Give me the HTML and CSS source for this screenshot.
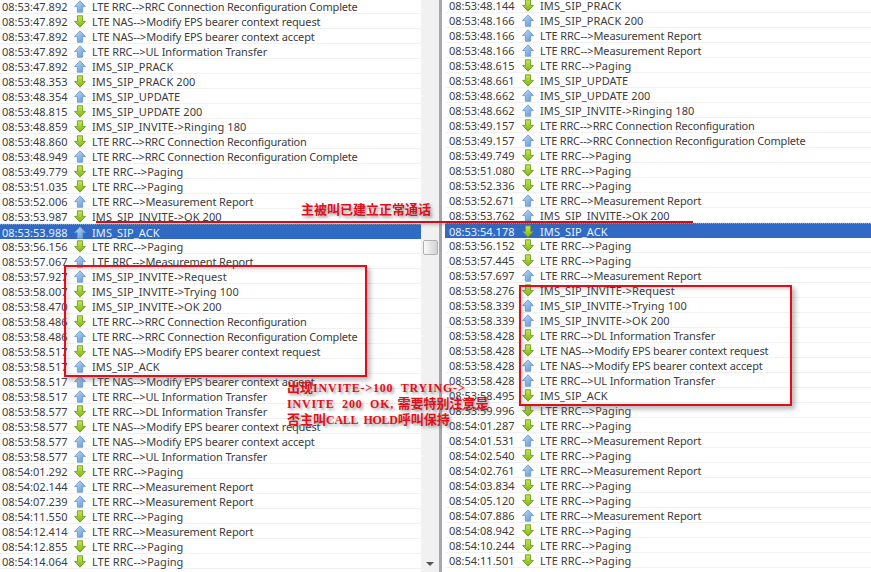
FILE: index.html
```html
<!DOCTYPE html>
<html lang="zh">
<head>
<meta charset="utf-8">
<title>Signalling trace</title>
<link rel="stylesheet" href="styles.css">
</head>
<body>
<svg class="defs" width="0" height="0" aria-hidden="true">
  <defs>
    <linearGradient id="gu" x1="0" y1="0" x2="1" y2="1"><stop offset="0" stop-color="#c4dcf6"/><stop offset="1" stop-color="#5c94d8"/></linearGradient>
    <linearGradient id="gd" x1="0" y1="0" x2="0" y2="1"><stop offset="0" stop-color="#cbe45a"/><stop offset="1" stop-color="#78b414"/></linearGradient>
    <symbol id="up" viewBox="0 0 12 13"><path d="M6 .8 11.4 6.6H8.6V12.2H3.4V6.6H.6Z" fill="url(#gu)" stroke="#6f9ccf" stroke-width=".9" stroke-linejoin="round"/></symbol>
    <symbol id="down" viewBox="0 0 12 13"><path d="M3.4.8H8.6V6.4H11.4L6 12.2.6 6.4H3.4Z" fill="url(#gd)" stroke="#6c9c18" stroke-width=".9" stroke-linejoin="round"/></symbol>
  </defs>
</svg>
<main class="split">
<section class="pane pane-left">
  <ul class="log log-left">
    <li class="row"><span class="t">08:53:47.892</span><svg class="ic"><use href="#up"/></svg><span class="m cfg">LTE RRC--&gt;RRC Connection Reconfiguration Complete</span></li>
    <li class="row"><span class="t">08:53:47.892</span><svg class="ic"><use href="#down"/></svg><span class="m">LTE NAS--&gt;Modify EPS bearer context request</span></li>
    <li class="row"><span class="t">08:53:47.892</span><svg class="ic"><use href="#up"/></svg><span class="m">LTE NAS--&gt;Modify EPS bearer context accept</span></li>
    <li class="row"><span class="t">08:53:47.892</span><svg class="ic"><use href="#up"/></svg><span class="m">LTE RRC--&gt;UL Information Transfer</span></li>
    <li class="row"><span class="t">08:53:47.892</span><svg class="ic"><use href="#up"/></svg><span class="m sip">IMS_SIP_PRACK</span></li>
    <li class="row"><span class="t">08:53:48.353</span><svg class="ic"><use href="#down"/></svg><span class="m sip">IMS_SIP_PRACK 200</span></li>
    <li class="row"><span class="t">08:53:48.354</span><svg class="ic"><use href="#up"/></svg><span class="m sip">IMS_SIP_UPDATE</span></li>
    <li class="row"><span class="t">08:53:48.815</span><svg class="ic"><use href="#down"/></svg><span class="m sip">IMS_SIP_UPDATE 200</span></li>
    <li class="row"><span class="t">08:53:48.859</span><svg class="ic"><use href="#down"/></svg><span class="m sip">IMS_SIP_INVITE-&gt;Ringing 180</span></li>
    <li class="row"><span class="t">08:53:48.860</span><svg class="ic"><use href="#down"/></svg><span class="m cfg">LTE RRC--&gt;RRC Connection Reconfiguration</span></li>
    <li class="row"><span class="t">08:53:48.949</span><svg class="ic"><use href="#up"/></svg><span class="m cfg">LTE RRC--&gt;RRC Connection Reconfiguration Complete</span></li>
    <li class="row"><span class="t">08:53:49.779</span><svg class="ic"><use href="#down"/></svg><span class="m pg">LTE RRC--&gt;Paging</span></li>
    <li class="row"><span class="t">08:53:51.035</span><svg class="ic"><use href="#down"/></svg><span class="m pg">LTE RRC--&gt;Paging</span></li>
    <li class="row"><span class="t">08:53:52.006</span><svg class="ic"><use href="#up"/></svg><span class="m">LTE RRC--&gt;Measurement Report</span></li>
    <li class="row"><span class="t">08:53:53.987</span><svg class="ic"><use href="#down"/></svg><span class="m sip">IMS_SIP_INVITE-&gt;OK 200</span></li>
    <li class="row sel"><span class="t">08:53:53.988</span><svg class="ic"><use href="#up"/></svg><span class="m sip">IMS_SIP_ACK</span></li>
    <li class="row"><span class="t">08:53:56.156</span><svg class="ic"><use href="#down"/></svg><span class="m pg">LTE RRC--&gt;Paging</span></li>
    <li class="row"><span class="t">08:53:57.067</span><svg class="ic"><use href="#up"/></svg><span class="m">LTE RRC--&gt;Measurement Report</span></li>
    <li class="row"><span class="t">08:53:57.927</span><svg class="ic"><use href="#up"/></svg><span class="m sip">IMS_SIP_INVITE-&gt;Request</span></li>
    <li class="row"><span class="t">08:53:58.007</span><svg class="ic"><use href="#down"/></svg><span class="m sip">IMS_SIP_INVITE-&gt;Trying 100</span></li>
    <li class="row"><span class="t">08:53:58.470</span><svg class="ic"><use href="#down"/></svg><span class="m sip">IMS_SIP_INVITE-&gt;OK 200</span></li>
    <li class="row"><span class="t">08:53:58.486</span><svg class="ic"><use href="#down"/></svg><span class="m cfg">LTE RRC--&gt;RRC Connection Reconfiguration</span></li>
    <li class="row"><span class="t">08:53:58.486</span><svg class="ic"><use href="#up"/></svg><span class="m cfg">LTE RRC--&gt;RRC Connection Reconfiguration Complete</span></li>
    <li class="row"><span class="t">08:53:58.517</span><svg class="ic"><use href="#down"/></svg><span class="m">LTE NAS--&gt;Modify EPS bearer context request</span></li>
    <li class="row"><span class="t">08:53:58.517</span><svg class="ic"><use href="#up"/></svg><span class="m sip">IMS_SIP_ACK</span></li>
    <li class="row"><span class="t">08:53:58.517</span><svg class="ic"><use href="#up"/></svg><span class="m">LTE NAS--&gt;Modify EPS bearer context accept</span></li>
    <li class="row"><span class="t">08:53:58.517</span><svg class="ic"><use href="#up"/></svg><span class="m">LTE RRC--&gt;UL Information Transfer</span></li>
    <li class="row"><span class="t">08:53:58.577</span><svg class="ic"><use href="#down"/></svg><span class="m">LTE RRC--&gt;DL Information Transfer</span></li>
    <li class="row"><span class="t">08:53:58.577</span><svg class="ic"><use href="#down"/></svg><span class="m">LTE NAS--&gt;Modify EPS bearer context request</span></li>
    <li class="row"><span class="t">08:53:58.577</span><svg class="ic"><use href="#up"/></svg><span class="m">LTE NAS--&gt;Modify EPS bearer context accept</span></li>
    <li class="row"><span class="t">08:53:58.577</span><svg class="ic"><use href="#up"/></svg><span class="m">LTE RRC--&gt;UL Information Transfer</span></li>
    <li class="row"><span class="t">08:54:01.292</span><svg class="ic"><use href="#down"/></svg><span class="m pg">LTE RRC--&gt;Paging</span></li>
    <li class="row"><span class="t">08:54:02.144</span><svg class="ic"><use href="#up"/></svg><span class="m">LTE RRC--&gt;Measurement Report</span></li>
    <li class="row"><span class="t">08:54:07.239</span><svg class="ic"><use href="#up"/></svg><span class="m">LTE RRC--&gt;Measurement Report</span></li>
    <li class="row"><span class="t">08:54:11.550</span><svg class="ic"><use href="#down"/></svg><span class="m pg">LTE RRC--&gt;Paging</span></li>
    <li class="row"><span class="t">08:54:12.414</span><svg class="ic"><use href="#up"/></svg><span class="m">LTE RRC--&gt;Measurement Report</span></li>
    <li class="row"><span class="t">08:54:12.855</span><svg class="ic"><use href="#down"/></svg><span class="m pg">LTE RRC--&gt;Paging</span></li>
    <li class="row"><span class="t">08:54:14.064</span><svg class="ic"><use href="#down"/></svg><span class="m pg">LTE RRC--&gt;Paging</span></li>
  </ul>
  <div class="scrollbar"><div class="thumb"></div><div class="arrow"></div></div>
</section>
<div class="divider"></div>
<section class="pane pane-right">
  <ul class="log log-right">
    <li class="row"><span class="t">08:53:48.144</span><svg class="ic"><use href="#down"/></svg><span class="m sip">IMS_SIP_PRACK</span></li>
    <li class="row"><span class="t">08:53:48.166</span><svg class="ic"><use href="#up"/></svg><span class="m sip">IMS_SIP_PRACK 200</span></li>
    <li class="row"><span class="t">08:53:48.166</span><svg class="ic"><use href="#up"/></svg><span class="m">LTE RRC--&gt;Measurement Report</span></li>
    <li class="row"><span class="t">08:53:48.166</span><svg class="ic"><use href="#up"/></svg><span class="m">LTE RRC--&gt;Measurement Report</span></li>
    <li class="row"><span class="t">08:53:48.615</span><svg class="ic"><use href="#down"/></svg><span class="m pg">LTE RRC--&gt;Paging</span></li>
    <li class="row"><span class="t">08:53:48.661</span><svg class="ic"><use href="#down"/></svg><span class="m sip">IMS_SIP_UPDATE</span></li>
    <li class="row"><span class="t">08:53:48.662</span><svg class="ic"><use href="#up"/></svg><span class="m sip">IMS_SIP_UPDATE 200</span></li>
    <li class="row"><span class="t">08:53:48.662</span><svg class="ic"><use href="#up"/></svg><span class="m sip">IMS_SIP_INVITE-&gt;Ringing 180</span></li>
    <li class="row"><span class="t">08:53:49.157</span><svg class="ic"><use href="#down"/></svg><span class="m cfg">LTE RRC--&gt;RRC Connection Reconfiguration</span></li>
    <li class="row"><span class="t">08:53:49.157</span><svg class="ic"><use href="#up"/></svg><span class="m cfg">LTE RRC--&gt;RRC Connection Reconfiguration Complete</span></li>
    <li class="row"><span class="t">08:53:49.749</span><svg class="ic"><use href="#down"/></svg><span class="m pg">LTE RRC--&gt;Paging</span></li>
    <li class="row"><span class="t">08:53:51.080</span><svg class="ic"><use href="#down"/></svg><span class="m pg">LTE RRC--&gt;Paging</span></li>
    <li class="row"><span class="t">08:53:52.336</span><svg class="ic"><use href="#down"/></svg><span class="m pg">LTE RRC--&gt;Paging</span></li>
    <li class="row"><span class="t">08:53:52.671</span><svg class="ic"><use href="#up"/></svg><span class="m">LTE RRC--&gt;Measurement Report</span></li>
    <li class="row"><span class="t">08:53:53.762</span><svg class="ic"><use href="#up"/></svg><span class="m sip">IMS_SIP_INVITE-&gt;OK 200</span></li>
    <li class="row sel"><span class="t">08:53:54.178</span><svg class="ic"><use href="#down"/></svg><span class="m sip">IMS_SIP_ACK</span></li>
    <li class="row"><span class="t">08:53:56.152</span><svg class="ic"><use href="#down"/></svg><span class="m pg">LTE RRC--&gt;Paging</span></li>
    <li class="row"><span class="t">08:53:57.445</span><svg class="ic"><use href="#down"/></svg><span class="m pg">LTE RRC--&gt;Paging</span></li>
    <li class="row"><span class="t">08:53:57.697</span><svg class="ic"><use href="#up"/></svg><span class="m">LTE RRC--&gt;Measurement Report</span></li>
    <li class="row"><span class="t">08:53:58.276</span><svg class="ic"><use href="#down"/></svg><span class="m sip">IMS_SIP_INVITE-&gt;Request</span></li>
    <li class="row"><span class="t">08:53:58.339</span><svg class="ic"><use href="#up"/></svg><span class="m sip">IMS_SIP_INVITE-&gt;Trying 100</span></li>
    <li class="row"><span class="t">08:53:58.339</span><svg class="ic"><use href="#up"/></svg><span class="m sip">IMS_SIP_INVITE-&gt;OK 200</span></li>
    <li class="row"><span class="t">08:53:58.428</span><svg class="ic"><use href="#down"/></svg><span class="m">LTE RRC--&gt;DL Information Transfer</span></li>
    <li class="row"><span class="t">08:53:58.428</span><svg class="ic"><use href="#down"/></svg><span class="m">LTE NAS--&gt;Modify EPS bearer context request</span></li>
    <li class="row"><span class="t">08:53:58.428</span><svg class="ic"><use href="#up"/></svg><span class="m">LTE NAS--&gt;Modify EPS bearer context accept</span></li>
    <li class="row"><span class="t">08:53:58.428</span><svg class="ic"><use href="#up"/></svg><span class="m">LTE RRC--&gt;UL Information Transfer</span></li>
    <li class="row"><span class="t">08:53:58.495</span><svg class="ic"><use href="#down"/></svg><span class="m sip">IMS_SIP_ACK</span></li>
    <li class="row"><span class="t">08:53:59.996</span><svg class="ic"><use href="#down"/></svg><span class="m pg">LTE RRC--&gt;Paging</span></li>
    <li class="row"><span class="t">08:54:01.287</span><svg class="ic"><use href="#down"/></svg><span class="m pg">LTE RRC--&gt;Paging</span></li>
    <li class="row"><span class="t">08:54:01.531</span><svg class="ic"><use href="#up"/></svg><span class="m">LTE RRC--&gt;Measurement Report</span></li>
    <li class="row"><span class="t">08:54:02.540</span><svg class="ic"><use href="#down"/></svg><span class="m pg">LTE RRC--&gt;Paging</span></li>
    <li class="row"><span class="t">08:54:02.761</span><svg class="ic"><use href="#up"/></svg><span class="m">LTE RRC--&gt;Measurement Report</span></li>
    <li class="row"><span class="t">08:54:03.834</span><svg class="ic"><use href="#down"/></svg><span class="m pg">LTE RRC--&gt;Paging</span></li>
    <li class="row"><span class="t">08:54:05.120</span><svg class="ic"><use href="#down"/></svg><span class="m pg">LTE RRC--&gt;Paging</span></li>
    <li class="row"><span class="t">08:54:07.886</span><svg class="ic"><use href="#up"/></svg><span class="m">LTE RRC--&gt;Measurement Report</span></li>
    <li class="row"><span class="t">08:54:08.942</span><svg class="ic"><use href="#down"/></svg><span class="m pg">LTE RRC--&gt;Paging</span></li>
    <li class="row"><span class="t">08:54:10.244</span><svg class="ic"><use href="#down"/></svg><span class="m pg">LTE RRC--&gt;Paging</span></li>
    <li class="row"><span class="t">08:54:11.501</span><svg class="ic"><use href="#down"/></svg><span class="m pg">LTE RRC--&gt;Paging</span></li>
  </ul>
</section>
</main>
<div class="mark box-left"></div>
<div class="mark box-right"></div>
<div class="mark rule"></div>
<p class="note note-top">主被叫已建立正常通话</p>
<p class="note note-main">出现<span class="lat">INVITE-&gt;100&nbsp; TRYING-&gt;</span><br><span class="lat">INVITE&nbsp; 200&nbsp; OK,</span> 需要特别注意是<br>否主叫<span class="lat lat-call">CALL&nbsp; HOLD</span>呼叫保持</p>
</body>
</html>
```
FILE: styles.css
```css
* { box-sizing: border-box; }
html, body { margin: 0; height: 572px; overflow: hidden; background: #fff; }
body { position: relative; font-family: "Noto Sans", "Liberation Sans", sans-serif; }
.defs { position: absolute; }

.split { display: flex; height: 572px; }
.pane { display: flex; min-width: 0; overflow: hidden; height: 572px; }
.pane-left { width: 439px; }
.pane-right { flex: 1; padding-left: 3px; }
.divider { width: 3px; background: #a4a8ac; }

.log { list-style: none; margin: 0; padding: 0; flex: 1; min-width: 0; }
.log-left { margin-top: -1px; }
.log-right { margin-top: -2px; }
.row {
  display: flex;
  align-items: center;
  height: 15px;
  padding-top: 1px;
  font-size: 11px;
  line-height: 14px;
  color: #3c3c3c;
  white-space: nowrap;
  border-bottom: 1px solid #f1f1f1;
}
.log-left .row { padding-left: 2px; }
.log-right .row { padding-left: 4px; }
.row .t { width: 72px; flex: none; }
.log-right .row .t { width: 73px; }
.row .m { letter-spacing: -.12px; }
.row .cfg { letter-spacing: -.2px; }
.row .sip { letter-spacing: .1px; }
.row .pg { letter-spacing: .05px; }
.ic { width: 12px; height: 13px; flex: none; margin-right: 6px; }
.sel { background: #316ac5; color: #e8f0fb; border-bottom: 0; border-top: 1px dotted #7fa3dc; }

.scrollbar { width: 18px; flex: none; background: #f1f1f1; display: flex; flex-direction: column; align-items: center; position: relative; }
.thumb {
  margin-top: 240px;
  width: 15px;
  height: 15px;
  border: 1px solid #b0b0b0;
  border-radius: 2px;
  background: linear-gradient(90deg, #fafafa, #d2d2d2);
}
.arrow {
  margin-top: 307px;
  width: 0;
  height: 0;
  border-left: 4px solid transparent;
  border-right: 4px solid transparent;
  border-top: 4px solid #555;
}

.mark { position: absolute; border: 2px solid #dc0f1b; box-shadow: 3px 3px 5px rgba(90, 90, 90, .45), inset 2px 2px 4px rgba(90, 90, 90, .25); }
.box-left { left: 64px; top: 265px; width: 303px; height: 112px; }
.box-right { left: 519px; top: 285px; width: 273px; height: 121px; }
.rule { left: 96px; top: 221px; width: 597px; height: 2px; border: 0; background: #c8101c; box-shadow: 1px 2px 3px rgba(90, 90, 90, .45); }

.note {
  position: absolute;
  margin: 0;
  font-family: "Liberation Serif", "Noto Sans CJK SC", serif;
  font-weight: 700;
  font-size: 13px;
  color: #e0101a;
  text-shadow: 2px 2px 3px rgba(90, 90, 90, .6);
  white-space: nowrap;
}
.note-top { left: 301px; top: 202px; line-height: 16px; }
.note-main { left: 287px; top: 380px; line-height: 16px; }
.lat { font-size: 12px; letter-spacing: .8px; }
.lat-call { letter-spacing: -.3px; }
```
